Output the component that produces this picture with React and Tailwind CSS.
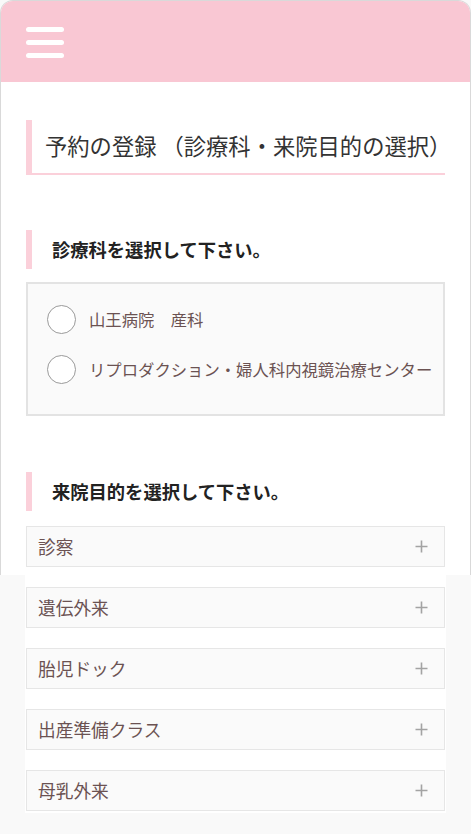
import React from 'react';

const font = { fontFamily: '"Noto Sans CJK JP", "Noto Sans", sans-serif' };

const departments = ['山王病院　産科', 'リプロダクション・婦人科内視鏡治療センター'];
const purposes = ['遺伝外来', '胎児ドック', '出産準備クラス', '母乳外来'];

const Plus = () => (
  <svg width="13" height="13" viewBox="0 0 13 13" className="shrink-0">
    <path d="M6.5 0.5v12M0.5 6.5h12" stroke="#a3a3a3" strokeWidth="1.6" />
  </svg>
);

const AccordionRow = ({ label }) => (
  <button className="flex h-[41px] w-full items-center justify-between border border-[#e6e6e6] bg-[#fafafa] pl-[11px] pr-[16px] text-left">
    <span className="text-[17.7px] leading-none text-[#6b5252]">{label}</span>
    <Plus />
  </button>
);

const SectionHeading = ({ children, className = '' }) => (
  <div className={`flex h-[39px] items-center border-l-[6px] border-[#fbd0da] pl-[20px] ${className}`}>
    <h3 className="text-[18.3px] font-bold leading-none text-[#222]">{children}</h3>
  </div>
);

export default function App() {
  return (
    <div className="flex h-[834px] w-[471px] flex-col overflow-hidden bg-[#f9f9f9]" style={font}>
      {/* upper card */}
      <div className="h-[575px] shrink-0 overflow-hidden rounded-t-[13px] border-x border-t border-[#d9d9d9] bg-white">
        <header className="flex h-[81px] items-start bg-[#f9c7d3] pl-[25px] pt-[26px]">
          <button className="flex flex-col gap-[8.5px]">
            <span className="block h-[4.5px] w-[38px] rounded-full bg-white" />
            <span className="block h-[4.5px] w-[38px] rounded-full bg-white" />
            <span className="block h-[4.5px] w-[38px] rounded-full bg-white" />
          </button>
        </header>

        <div className="px-[25px]">
          <div className="mt-[38px] flex h-[55px] items-center border-b-2 border-l-[6px] border-[#fbd0da] pl-[13px]">
            <h2 className="-mt-[3px] whitespace-nowrap text-[22.3px] leading-none text-[#333]">
              予約の登録 （診療科・来院目的の選択）
            </h2>
          </div>

          <SectionHeading className="mt-[55px]">診療科を選択して下さい。</SectionHeading>

          <div className="mt-[13px] border-2 border-[#e3e3e3] bg-[#fafafa] pb-[20px] pl-[19px] pt-[10px]">
            {departments.map((d) => (
              <label key={d} className="flex h-[50px] items-center gap-[13px]">
                <span className="block h-[29px] w-[29px] shrink-0 rounded-full border-[1.5px] border-[#9a9a9a] bg-white" />
                <span className="whitespace-nowrap text-[16.35px] leading-none text-[#6b5252]">{d}</span>
              </label>
            ))}
          </div>

          <SectionHeading className="mt-[56px]">来院目的を選択して下さい。</SectionHeading>

          <div className="mt-[15px]">
            <AccordionRow label="診察" />
          </div>
        </div>
      </div>

      {/* lower strip */}
      <div className="mx-[25px] flex h-[238px] flex-col gap-[20px] bg-white px-[1px] pt-[12px]">
        {purposes.map((p) => (
          <AccordionRow key={p} label={p} />
        ))}
      </div>
    </div>
  );
}
